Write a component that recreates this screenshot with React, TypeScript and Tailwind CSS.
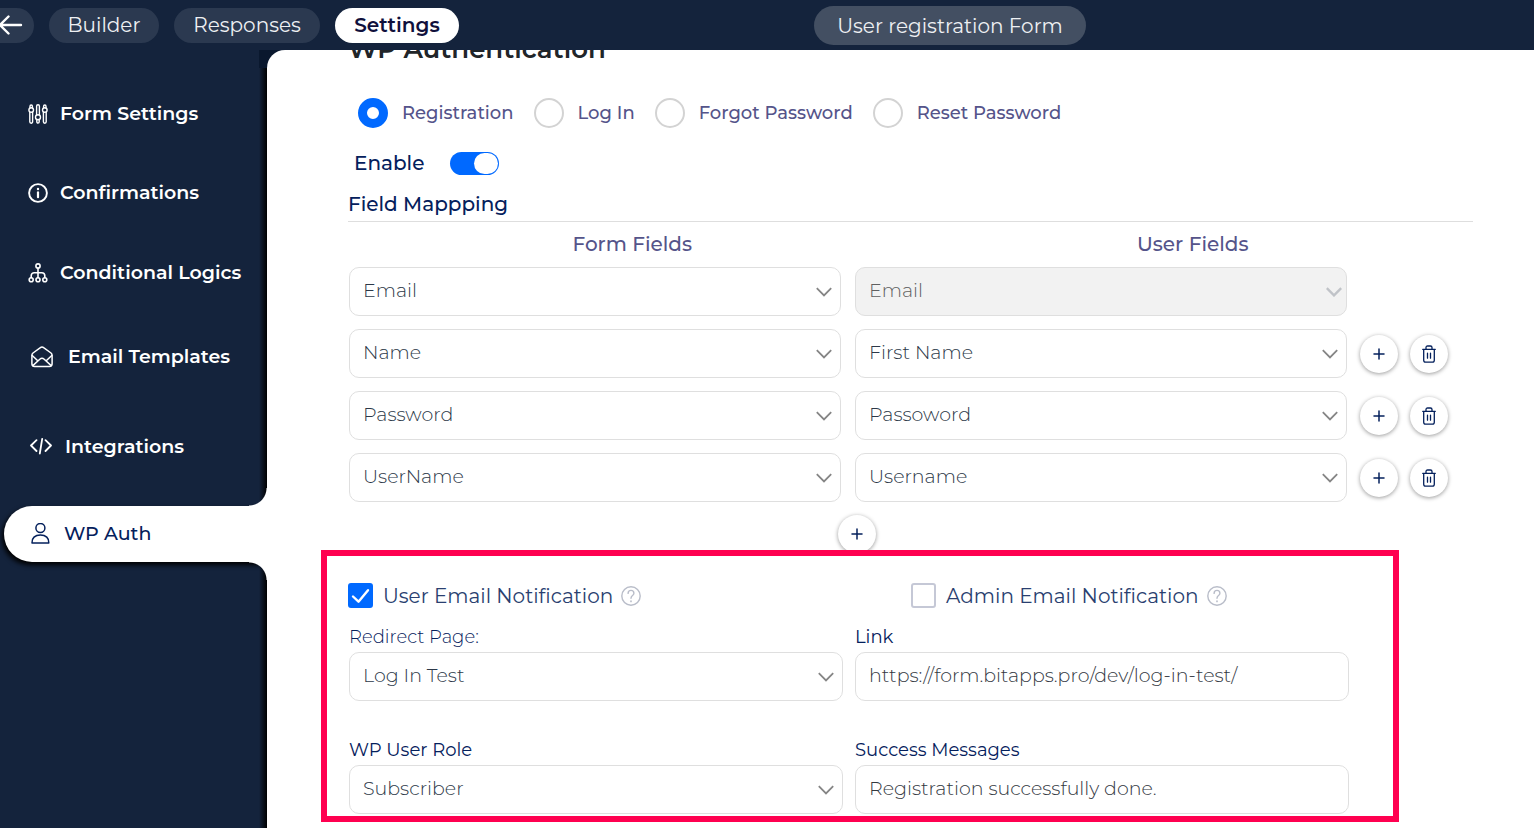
import type { ReactNode } from 'react';

const strokeProps = {
  fill: 'none',
  stroke: 'currentColor',
  strokeLinecap: 'round',
  strokeLinejoin: 'round',
} as const;

function SlidersIcon() {
  return (
    <svg viewBox="0 0 20 20" className="h-5 w-5 shrink-0" {...strokeProps} strokeWidth="1.4">
      <circle cx="3.2" cy="6" r="2.3" />
      <path d="M2 4V2.2a1.2 1.2 0 0 1 2.4 0V4M1.8 8.2v9.6a1.4 1.4 0 0 0 2.8 0V8.2" />
      <circle cx="10" cy="13.2" r="2.5" />
      <path d="M8.6 11V2.2a1.4 1.4 0 0 1 2.8 0V11M8.8 15.4v2.4a1.2 1.2 0 0 0 2.4 0v-2.4" />
      <circle cx="16.8" cy="6" r="2.3" />
      <path d="M15.6 4V2.2a1.2 1.2 0 0 1 2.4 0V4M15.4 8.2v9.6a1.4 1.4 0 0 0 2.8 0V8.2" />
    </svg>
  );
}

function InfoIcon() {
  return (
    <svg viewBox="0 0 20 20" className="h-5 w-5 shrink-0" {...strokeProps} strokeWidth="1.9">
      <circle cx="10" cy="10" r="8.900" />
      <path d="M10 9.4v4.8" strokeWidth="2.2" />
      <path d="M10 6v.1" strokeWidth="2.4" />
    </svg>
  );
}

function TreeIcon() {
  return (
    <svg viewBox="0 0 20 20" className="h-5 w-5 shrink-0" {...strokeProps} strokeWidth="1.6">
      <circle cx="10" cy="3" r="2.1" />
      <circle cx="3.2" cy="16.8" r="2" />
      <circle cx="10" cy="16.8" r="2" />
      <circle cx="16.8" cy="16.8" r="2" />
      <path d="M10 5.2v9.4M3.2 14.6v-1.8a3 3 0 0 1 3-3h7.6a3 3 0 0 1 3 3v1.8" />
    </svg>
  );
}

function MailOpenIcon() {
  return (
    <svg viewBox="0 0 22 22" className="h-[22px] w-[22px] shrink-0" {...strokeProps} strokeWidth="1.5">
      <path d="M.9 9.2c0-1 .3-1.500 1.100-2.200L9.400 1.700c1-.8 2.200-.8 3.200 0L20 7c.8.700 1.100 1.200 1.100 2.200v8.600c0 1.700-1 2.700-2.700 2.700H3.600C1.900 20.500.9 19.500.9 17.800z" />
      <path d="M1.200 9.500l5.300 5M20.800 9.500l-5.300 5M1.800 19.600l7-6.400c1.400-1.200 3-1.200 4.400 0l7 6.400" />
    </svg>
  );
}

function CodeIcon() {
  return (
    <svg viewBox="0 0 22 18" className="h-[18px] w-[22px] shrink-0" {...strokeProps} strokeWidth="1.8">
      <path d="M6.500 2.200L1 7.500l5.500 5.500M15.500 2.200L21 7.500l-5.500 5.500M12.200.900L9.800 15.500" />
    </svg>
  );
}

function UserIcon() {
  return (
    <svg viewBox="0 0 20 22" className="h-[22px] w-5 shrink-0" {...strokeProps} strokeWidth="1.5">
      <circle cx="10.400" cy="5" r="4.500" />
      <path d="M2 19.900c-.4-4.800 3-8 8.400-8s8.800 3.200 8.400 8z" />
    </svg>
  );
}

function ArrowLeftIcon() {
  return (
    <svg viewBox="0 0 24 20" className="h-5 w-6" {...strokeProps} strokeWidth="2.4">
      <path d="M21 10H0M8.500 1.500L0 10l8.500 8.500" />
    </svg>
  );
}

function PlusIcon() {
  return (
    <svg viewBox="0 0 12 12" className="h-3 w-3" {...strokeProps} strokeWidth="1.500">
      <path d="M6 1v10M1 6h10" />
    </svg>
  );
}

function TrashIcon() {
  return (
    <svg viewBox="0 0 14 18" className="h-[18px] w-3.5" {...strokeProps} strokeWidth="1.3">
      <path d="M.7 4.300h12.600M4 4V2.600C4 1.500 4.600 1 5.600 1h2.800c1 0 1.600.5 1.600 1.600V4M1.700 4.500v10.700c0 1.300.6 1.900 1.900 1.900h6.800c1.300 0 1.900-.6 1.900-1.900V4.500" />
      <path d="M5.500 8.200v5M8.500 8.200v5" />
    </svg>
  );
}

function HelpIcon() {
  return (
    <svg viewBox="0 0 20 20" className="h-5 w-5 text-[#b9bdc9]" {...strokeProps} strokeWidth="1.400">
      <circle cx="10" cy="10" r="9.200" />
      <path d="M7.100 7.400c0-1.800 1.200-3 2.900-3s2.900 1.200 2.900 2.800c0 2.400-2.900 2.400-2.900 5" />
      <path d="M10 15.200v.2" strokeWidth="1.700" />
    </svg>
  );
}

type NavEntry = { label: string; icon: ReactNode; className: string };

const navEntries: NavEntry[] = [
  { label: 'Form Settings', icon: <SlidersIcon />, className: 'mb-[23px] gap-3 pl-7' },
  { label: 'Confirmations', icon: <InfoIcon />, className: 'mb-6 gap-3 pl-7' },
  { label: 'Conditional Logics', icon: <TreeIcon />, className: 'mb-7 gap-3 pl-7' },
  { label: 'Email Templates', icon: <MailOpenIcon />, className: 'mb-[34px] gap-[15px] pl-[31px]' },
  { label: 'Integrations', icon: <CodeIcon />, className: 'mb-[31px] gap-[13px] pl-[30px]' },
];

function Sidebar() {
  return (
    <aside className="relative w-[267px] shrink-0 text-white">
      <span className="absolute top-0 right-[-18px] h-[18px] w-[26px] bg-[#0a182e]" />
      <span className="absolute top-[18px] right-0 bottom-0 w-2 bg-linear-to-r from-transparent to-black" />
      <nav className="relative pt-9 text-[19px] font-semibold">
        {navEntries.map((entry) => (
          <a key={entry.label} href="#" className={`flex h-14 items-center ${entry.className}`}>
            {entry.icon}
            {entry.label}
          </a>
        ))}
        <a
          href="#"
          aria-current="page"
          className="relative ml-1 flex h-14 items-center gap-3.5 rounded-l-full bg-white pl-[26px] font-medium text-[#04205c] shadow-[-2px_3px_5px_#000000]"
        >
          <span className="absolute right-0 bottom-full h-[18px] w-[18px] bg-[radial-gradient(circle_at_0_0,transparent_17px,white_18px)]" />
          <UserIcon />
          WP Auth
          <span className="absolute top-full right-0 h-[18px] w-[18px] bg-[radial-gradient(circle_at_0_100%,transparent_17px,white_18px)]" />
        </a>
      </nav>
    </aside>
  );
}

function SelectBox({ label, value, id, disabled = false }: { label?: string; value: string; id?: string; disabled?: boolean }) {
  return (
    <div className="relative">
      <select
        id={id}
        aria-label={label}
        disabled={disabled}
        defaultValue={value}
        className="block h-[49px] w-full appearance-none rounded-[10px] border border-[#dfdfdf] bg-white px-[13px] text-[19px] font-light text-[#2c3848] disabled:bg-[#f2f2f2] disabled:text-[#606060] disabled:opacity-100"
      >
        <option>{value}</option>
      </select>
      <svg
        viewBox="0 0 16 10"
        className={`pointer-events-none absolute top-5 h-2.5 w-4 ${disabled ? 'right-[5px] text-[#c0c3c8]' : 'right-[9px] text-[#858585]'}`}
        fill="none"
        stroke="currentColor"
        strokeWidth={disabled ? 2.4 : 1.8}
      >
        <path d="M.8 1.200L8 8.400l7.200-7.200" />
      </svg>
    </div>
  );
}

function RoundButton({ label, children }: { label: string; children: ReactNode }) {
  return (
    <button
      type="button"
      aria-label={label}
      className="flex h-[38px] w-[38px] items-center justify-center rounded-full bg-white text-[#04205c] shadow-[0_1px_4px_rgba(0,0,0,0.4)]"
    >
      {children}
    </button>
  );
}

const mappings = [
  { form: 'Email', user: 'Email', locked: true },
  { form: 'Name', user: 'First Name', locked: false },
  { form: 'Password', user: 'Passoword', locked: false },
  { form: 'UserName', user: 'Username', locked: false },
];

const authTypes = ['Registration', 'Log In', 'Forgot Password', 'Reset Password'];

function Notification({ label, checked = false }: { label: string; checked?: boolean }) {
  return (
    <div className="flex items-center gap-2">
      <label className="flex items-center gap-2.5">
        <span className="relative h-[25px] w-[25px]">
          <input
            type="checkbox"
            defaultChecked={checked}
            className="peer block h-[25px] w-[25px] appearance-none rounded-[3px] border-2 border-[#c5c8d6] bg-white checked:border-[#0069ff] checked:bg-[#0069ff]"
          />
          <svg
            viewBox="0 0 25 25"
            className="pointer-events-none absolute inset-0 hidden text-white peer-checked:block"
            {...strokeProps}
            strokeWidth="2.400"
          >
            <path d="M5 13.500l5.500 5.200L20 7.200" />
          </svg>
        </span>
        {label}
      </label>
      <button type="button" aria-label={`About ${label}`}>
        <HelpIcon />
      </button>
    </div>
  );
}

const inputClass =
  'block h-[49px] w-full rounded-[10px] border border-[#dfdfdf] bg-white px-[13px] pb-[2px] text-[19px] font-light text-[#33383f]';

export default function App() {
  return (
    <div className="flex min-h-screen flex-col bg-[#14233c] font-['Montserrat','Inter',sans-serif]">
      <header className="flex h-[50px] items-center gap-[15px] text-[20px] text-[#eef0f3]">
        <button type="button" aria-label="Back" className="flex h-[35px] w-[34px] items-center rounded-r-full bg-[#2b3950] text-white">
          <ArrowLeftIcon />
        </button>
        <a href="#" className="flex h-[35px] w-[110px] items-center justify-center rounded-full bg-[#2b3950]">
          Builder
        </a>
        <a href="#" className="flex h-[35px] w-[146px] items-center justify-center rounded-full bg-[#2b3950]">
          Responses
        </a>
        <a href="#" className="flex h-[35px] w-[124px] items-center justify-center rounded-full bg-white font-semibold text-[#10103c]">
          Settings
        </a>
        <button type="button" className="mr-[448px] ml-auto h-[39px] w-[272px] rounded-full bg-[#434f62] pt-0.5">
          User registration Form
        </button>
      </header>

      <div className="flex flex-1">
        <Sidebar />
        <main className="relative min-w-0 flex-1 overflow-hidden rounded-tl-[18px] bg-white pr-[61px] pb-1.5 pl-[81px]">
          <h1 className="-mt-[19px] text-[26px] leading-9 font-semibold text-[#212529]">WP Authentication</h1>

          <div role="radiogroup" aria-label="Form type" className="mt-[31px] flex gap-5 pl-2.5 text-[18px] leading-7 font-medium text-[#55548a]">
            {authTypes.map((type, index) => (
              <label key={type} className="flex items-center gap-3.5">
                <input
                  type="radio"
                  name="auth-type"
                  defaultChecked={index === 0}
                  className="h-[30px] w-[30px] appearance-none rounded-full border-2 border-[#d3d3d3] bg-white checked:border-[9px] checked:border-[#0069ff]"
                />
                {type}
              </label>
            ))}
          </div>

          <label className="mt-[23px] flex w-fit items-center gap-[26px] pl-1.5 text-[20px] leading-6 font-medium text-[#04205c]">
            Enable
            <input
              type="checkbox"
              role="switch"
              defaultChecked
              className="flex h-[23px] w-[49px] appearance-none items-center rounded-full bg-[#b9bdc9] p-px before:h-[21px] before:w-6 before:rounded-full before:bg-white checked:justify-end checked:bg-[#0069ff]"
            />
          </label>

          <h2 className="mt-[15px] border-b border-[#dedede] pb-[3px] text-[20px] leading-7 font-medium text-[#04205c]">Field Mappping</h2>

          <div className="mt-2 grid grid-cols-2 pl-1 text-center text-[20px] leading-7 font-medium text-[#55548a]">
            <span>Form Fields</span>
            <span>User Fields</span>
          </div>

          <div className="mt-[9px] flex flex-col gap-[13px] pl-px">
            {mappings.map((row) => (
              <div key={row.form} className="flex items-center gap-[13px]">
                <div className="grid flex-1 grid-cols-2 gap-3.5">
                  <SelectBox label={`Form field for ${row.user}`} value={row.form} />
                  <SelectBox label={`User field for ${row.form}`} value={row.user} disabled={row.locked} />
                </div>
                <div className="flex w-[113px] gap-3">
                  {!row.locked && (
                    <>
                      <RoundButton label="Add row">
                        <PlusIcon />
                      </RoundButton>
                      <RoundButton label="Delete row">
                        <TrashIcon />
                      </RoundButton>
                    </>
                  )}
                </div>
              </div>
            ))}
          </div>

          <div className="mt-[13px] flex justify-center pr-[107px]">
            <RoundButton label="Add mapping">
              <PlusIcon />
            </RoundButton>
          </div>

          <section className="relative -mt-[3px] mr-[74px] -ml-[27px] border-6 border-[#ff0050] bg-white pt-[27px] pr-11 pb-0.5 pl-[21px] text-[#04205c]">
            <div className="grid grid-cols-[9fr_7fr] text-[20px] leading-6 text-[#2a3f70]">
              <Notification label="User Email Notification" checked />
              <Notification label="Admin Email Notification" />
            </div>

            <div className="mt-[17px] grid grid-cols-2 gap-3 pl-px text-[18px]">
              <div>
                <label htmlFor="redirect" className="mb-[3px] block leading-6 font-light">
                  Redirect Page:
                </label>
                <SelectBox id="redirect" value="Log In Test" />
              </div>
              <div>
                <label htmlFor="link" className="mb-[3px] block leading-6">
                  Link
                </label>
                <input id="link" type="text" defaultValue="https://form.bitapps.pro/dev/log-in-test/" className={inputClass} />
              </div>
            </div>

            <div className="mt-[37px] grid grid-cols-2 gap-3 pl-px text-[18px]">
              <div>
                <label htmlFor="role" className="mb-[3px] block leading-6">
                  WP User Role
                </label>
                <SelectBox id="role" value="Subscriber" />
              </div>
              <div>
                <label htmlFor="success" className="mb-[3px] block leading-6">
                  Success Messages
                </label>
                <input id="success" type="text" defaultValue="Registration successfully done." className={inputClass} />
              </div>
            </div>
          </section>
        </main>
      </div>
    </div>
  );
}
